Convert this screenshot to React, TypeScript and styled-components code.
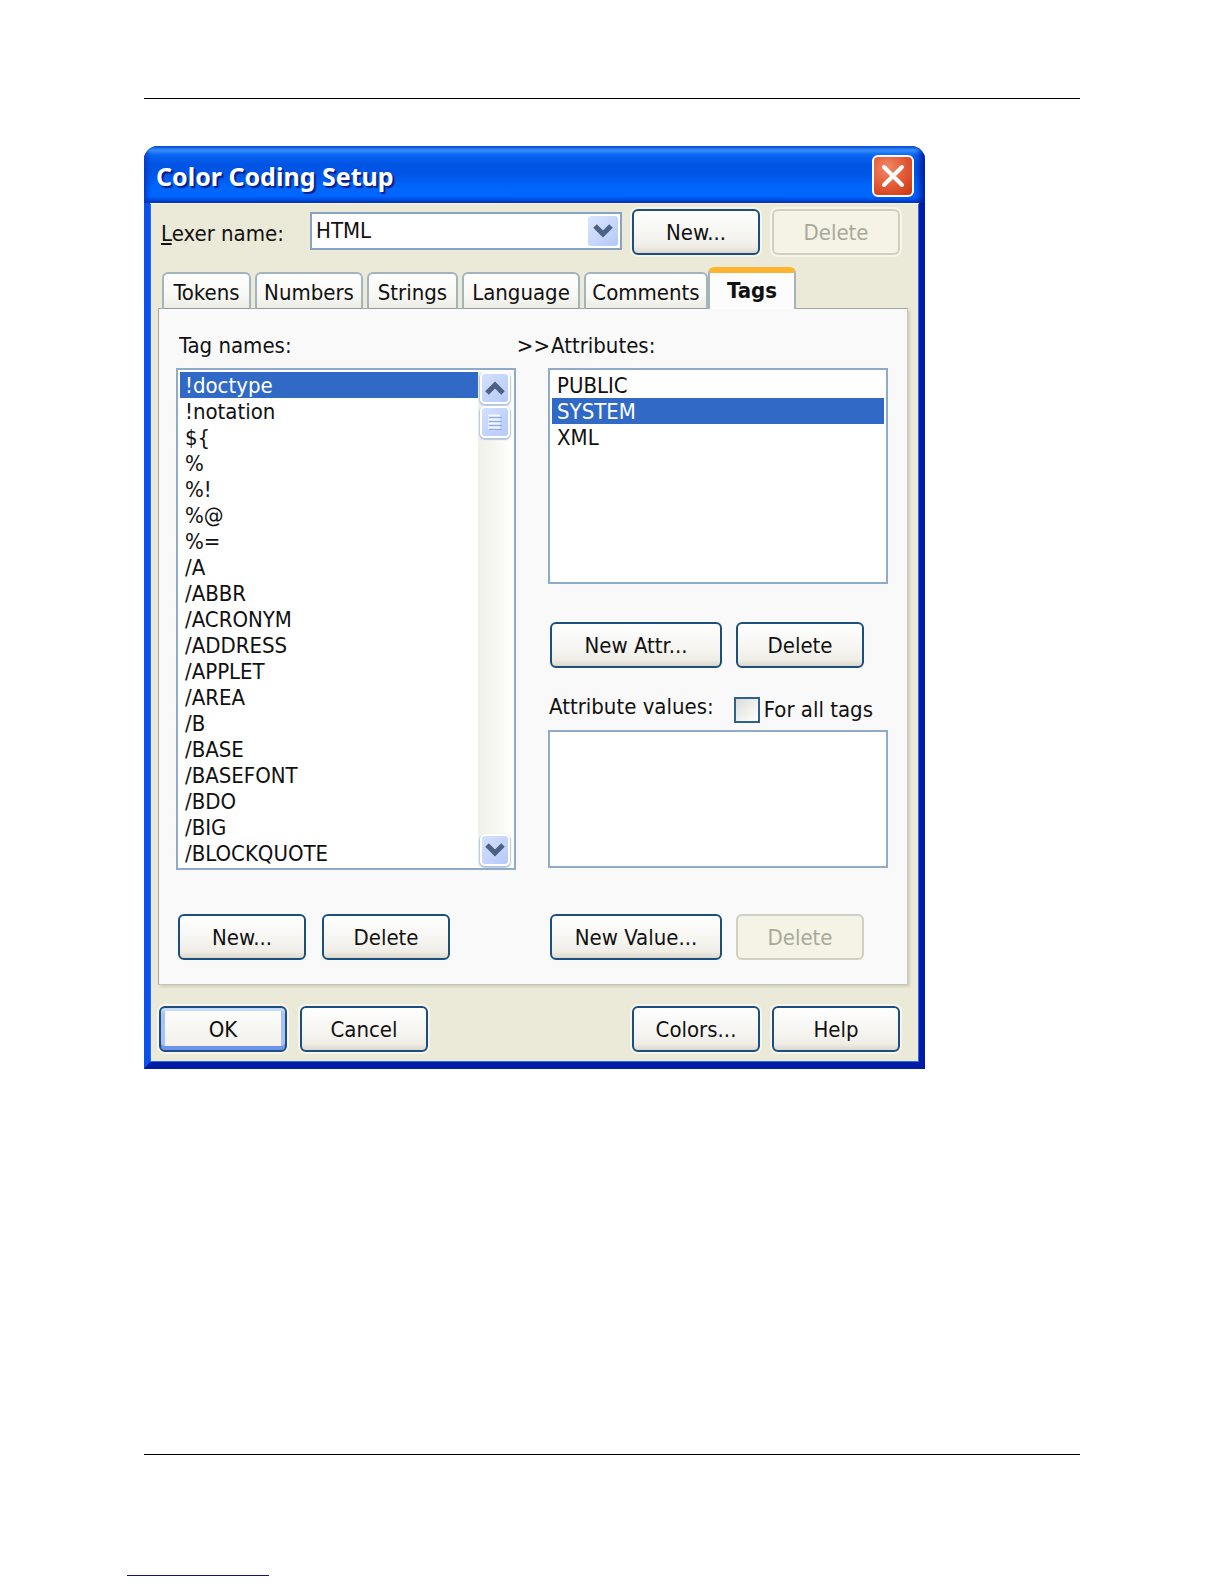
import React, { useState } from 'react';
import styled, { createGlobalStyle, css } from 'styled-components';

const uiFont = '"DejaVu Sans Condensed", "DejaVu Sans", "Noto Sans", sans-serif';

const GlobalStyle = createGlobalStyle`
  *, *::before, *::after { box-sizing: border-box; }
  body { margin: 0; background: #fff; }
`;

const Page = styled.div`
  display: flex;
  flex-direction: column;
  min-height: 100vh;
  padding: 98px 144px 8px;
  font-family: ${uiFont};
  font-size: 22px;
  line-height: 26px;
  color: #111;
`;

const Rule = styled.hr`
  width: 100%;
  height: 1px;
  margin: 0;
  border: 0;
  background: #000;
`;

const PageFoot = styled.footer`
  margin-top: auto;
`;

const LinkLine = styled.div`
  width: 142px;
  height: 1px;
  margin: 120px 0 0 -17px;
  background: #14147c;
`;

const Dialog = styled.section`
  width: 100%;
  max-width: 781px;
  margin: 47px 0 48px;
  border-radius: 14px 14px 0 0;
  overflow: hidden;
  background: #0848dc;
`;

const TitleBar = styled.header`
  display: flex;
  align-items: center;
  justify-content: space-between;
  height: 57px;
  padding: 3px 11px 0 12px;
  background: linear-gradient(
    #0a5ae0 0,
    #3a92ff 4px,
    #0a66f4 9px,
    #0054e3 18px,
    #0055e6 28px,
    #0066fd 42px,
    #0066ff 50px,
    #0050e0 54px,
    #0038c0 57px
  );
  box-shadow: inset 5px 0 5px -2px #0838c8, inset -7px 0 6px -2px #0020a4;
`;

const Title = styled.h1`
  margin: 0;
  font-family: "Noto Sans", "Open Sans", sans-serif;
  font-size: 25px;
  font-weight: 700;
  line-height: 30px;
  color: #fff;
  text-shadow: 2px 2px 1px #0a1e88;
`;

const CloseButton = styled.button`
  display: grid;
  place-items: center;
  width: 42px;
  height: 42px;
  padding: 0;
  border: 2px solid #fff;
  border-radius: 6px;
  background: radial-gradient(circle at 35% 30%, #ee8a6c 0, #e35a36 50%, #c83410 100%);
`;

const Body = styled.div`
  padding: 6px 11px 10px 8px;
  border: 6px solid;
  border-top: 0;
  border-bottom-width: 7px;
  border-color: #0a50ec #001ca4 #001ca4 #0a50ec;
  background: #ebe9d8;
  box-shadow: inset 0 1px 0 #fbf8e8, inset 1px -1px 0 #2a6cf0, inset -1px 0 0 #2a6cf0;
`;

const LexerRow = styled.div`
  display: flex;
  align-items: center;
  padding: 0 8px 0 3px;
`;

const LexerLabel = styled.label`
  width: 149px;
  flex: none;
  padding-top: 4px;
`;

const Combo = styled.div`
  display: grid;
  grid-template-columns: 1fr 32px;
  align-items: center;
  flex: 1;
  min-width: 0;
  height: 38px;
  margin-bottom: 2px;
  padding: 2px;
  border: 2px solid #86a3c4;
  background: #fff;
`;

const ComboSelect = styled.select`
  grid-area: 1 / 1 / 2 / 3;
  width: 100%;
  height: 28px;
  padding: 0 32px 0 2px;
  border: 0;
  outline: 0;
  appearance: none;
  background: transparent;
  color: inherit;
  font: inherit;
`;

const ArrowFace = styled.span`
  grid-area: 1 / 2;
  display: grid;
  place-items: center;
  height: 30px;
  margin-left: 2px;
  border-radius: 3px;
  background: linear-gradient(135deg, #dce6ff, #b4c8f8);
  pointer-events: none;
`;

const ButtonRow = styled.div<{ $gap: number; $inset?: number }>`
  display: flex;
  gap: ${(p) => p.$gap}px;
  padding-left: ${(p) => p.$inset ?? 0}px;
`;

const LexerButtons = styled(ButtonRow)`
  margin-left: 10px;
`;

const Button = styled.button<{ $wide?: boolean; $primary?: boolean; $halo?: boolean }>`
  flex: none;
  width: ${(p) => (p.$wide ? 172 : 128)}px;
  height: 46px;
  padding: 2px 0 0;
  border: 2px solid #1c4f80;
  border-radius: 6px;
  background: linear-gradient(#fff, #f5f4f0 60%, #efede6 85%, #dcd8cc);
  color: inherit;
  font: inherit;
  ${(p) =>
    p.$primary &&
    css`
      background: linear-gradient(#fdfdfc, #f1f0ea);
    `}
  box-shadow: ${(p) =>
    [
      p.$primary && 'inset 0 3px 0 #c6dcfc, inset 0 -4px 0 #6f92ea, inset 4px 0 0 #a8c2f6, inset -4px 0 0 #a8c2f6',
      p.$halo && '0 0 0 2px #f7f5ec',
    ]
      .filter(Boolean)
      .join(', ') || 'none'};

  &:disabled {
    border-color: #d0d0c2;
    background: #f4f3e6;
    color: #a9a99a;
  }
`;

const Tabs = styled.div`
  display: flex;
  align-items: flex-end;
  gap: 4px;
  height: 42px;
  margin: 12px 0 -1px;
  padding-left: 4px;
`;

const Tab = styled.button<{ $active: boolean; $width: number }>`
  position: relative;
  width: ${(p) => p.$width}px;
  height: 37px;
  padding: 3px 0 0;
  border: 2px solid #a3b4bd;
  border-bottom: 1px solid #919b9c;
  border-radius: 6px 6px 0 0;
  background: linear-gradient(#fff, #f6f6f2 70%, #ecebe4);
  color: inherit;
  font: inherit;
  ${(p) =>
    p.$active &&
    css`
      height: 42px;
      margin-left: -4px;
      padding: 0 0 1px;
      border-top: 6px solid #fdb52f;
      border-bottom: 0;
      background: #fcfcfc;
      font-weight: 700;
    `}
`;

const Panel = styled.div`
  display: grid;
  grid-template-columns: 1fr 32px 1fr;
  padding: 24px 19px 24px 17px;
  border: 1px solid;
  border-color: #a0a6a4 #c8c6b8 #c8c6b8 #a0a6a4;
  background: #f9f9f9;
  box-shadow: 2px 2px 2px #d2cfbe;
`;

const Column = styled.div`
  display: flex;
  flex-direction: column;
  min-width: 0;
`;

const Caption = styled.div`
  padding-left: 3px;
  margin-bottom: 9px;
  white-space: nowrap;
`;

const Marker = styled.span`
  margin-right: -2px;
  justify-self: end;
  white-space: nowrap;
`;

const ListFrame = styled.div<{ $height: number; $after: number }>`
  display: flex;
  height: ${(p) => p.$height}px;
  margin-bottom: ${(p) => p.$after}px;
  padding: 2px;
  border: 2px solid #8fabc8;
  background: #fff;
`;

const List = styled.ul`
  flex: 1;
  min-width: 0;
  margin: 0;
  padding: 0;
  list-style: none;
  overflow: hidden;
`;

const Item = styled.li<{ $selected: boolean }>`
  height: 26px;
  padding-left: 5px;
  line-height: 28px;
  white-space: nowrap;
  background: ${(p) => (p.$selected ? '#3169c6' : 'transparent')};
  color: ${(p) => (p.$selected ? '#fff' : 'inherit')};
`;

const ScrollTrack = styled.div`
  display: flex;
  flex-direction: column;
  align-items: center;
  width: 34px;
  background: linear-gradient(90deg, #f0f0ea, #fefefb);
`;

const ScrollButton = styled.button`
  display: grid;
  place-items: center;
  width: 30px;
  height: 32px;
  padding: 0;
  border: 2px solid #fff;
  border-radius: 5px;
  background: linear-gradient(135deg, #d3e0ff, #b6caf8);
  box-shadow: 0 1px 1px 1px #b4c6e6;
  &:last-child {
    margin-top: auto;
  }
`;

const Thumb = styled(ScrollButton)`
  margin-top: 2px;
`;

const ValuesHead = styled.div`
  display: flex;
  align-items: flex-start;
  justify-content: space-between;
  height: 26px;
  margin: 28px 0 8px;
  padding: 0 15px 0 1px;
  white-space: nowrap;
`;

const ValuesLabel = styled.span`
  line-height: 22px;
`;

const CheckLabel = styled.label`
  display: flex;
  align-items: center;
  gap: 4px;
  line-height: 28px;
`;

const CheckBox = styled.input`
  width: 26px;
  height: 26px;
  margin: 0;
  appearance: none;
  border: 2px solid #2f6090;
  background: linear-gradient(135deg, #dcdcd6, #fff);
  &:checked {
    background: #2f8a2f;
  }
`;

const Footer = styled.div`
  display: flex;
  justify-content: space-between;
  margin-top: 21px;
  padding: 0 8px 0 1px;
`;

const Chevron = ({ up = false }: { up?: boolean }) => (
  <svg width="20" height="14" viewBox="0 0 20 14" fill="none" stroke="#4d6185" strokeWidth="5" aria-hidden="true">
    <path d={up ? 'M2 12 L10 4 L18 12' : 'M2 2 L10 10 L18 2'} />
  </svg>
);

const tabs = [
  { name: 'Tokens', width: 89 },
  { name: 'Numbers', width: 108 },
  { name: 'Strings', width: 91 },
  { name: 'Language', width: 118 },
  { name: 'Comments', width: 124 },
  { name: 'Tags', width: 88 },
];

const tagNames = [
  '!doctype', '!notation', '${', '%', '%!', '%@', '%=', '/A', '/ABBR', '/ACRONYM', '/ADDRESS',
  '/APPLET', '/AREA', '/B', '/BASE', '/BASEFONT', '/BDO', '/BIG', '/BLOCKQUOTE',
];

const attributes = ['PUBLIC', 'SYSTEM', 'XML'];

type ListBoxProps = {
  label: string;
  items: string[];
  initial?: string;
  height: number;
  after: number;
  scroll?: boolean;
};

function ListBox({ label, items, initial, height, after, scroll }: ListBoxProps) {
  const [selected, setSelected] = useState(initial);
  return (
    <ListFrame $height={height} $after={after}>
      <List role="listbox" aria-labelledby={label} tabIndex={0}>
        {items.map((item) => (
          <Item
            key={item}
            role="option"
            aria-selected={item === selected}
            $selected={item === selected}
            onClick={() => setSelected(item)}
          >
            {item}
          </Item>
        ))}
      </List>
      {scroll && (
        <ScrollTrack>
          <ScrollButton type="button" aria-label="Scroll up"><Chevron up /></ScrollButton>
          <Thumb type="button" aria-label="Scroll thumb">
            <svg width="14" height="16" viewBox="0 0 14 16" aria-hidden="true">
              <path d="M0 1.5H12M0 5.5H12M0 9.5H12M0 13.5H12" stroke="#f2f6ff" strokeWidth="2" />
              <path d="M1 3.5H14M1 7.5H14M1 11.5H14M1 15.5H14" stroke="#8fa9e6" strokeWidth="1" />
            </svg>
          </Thumb>
          <ScrollButton type="button" aria-label="Scroll down"><Chevron /></ScrollButton>
        </ScrollTrack>
      )}
    </ListFrame>
  );
}

export default function App() {
  const [tab, setTab] = useState('Tags');
  return (
    <Page>
      <GlobalStyle />
      <Rule />
      <Dialog role="dialog" aria-labelledby="dialog-title">
        <TitleBar>
          <Title id="dialog-title">Color Coding Setup</Title>
          <CloseButton type="button" aria-label="Close">
            <svg width="24" height="24" viewBox="0 0 24 24" stroke="#fff" strokeWidth="4" strokeLinecap="round" aria-hidden="true">
              <path d="M3 3 L21 21 M21 3 L3 21" />
            </svg>
          </CloseButton>
        </TitleBar>
        <Body>
          <LexerRow>
            <LexerLabel htmlFor="lexer"><u>L</u>exer name:</LexerLabel>
            <Combo>
              <ComboSelect id="lexer" defaultValue="HTML">
                <option>HTML</option>
              </ComboSelect>
              <ArrowFace><Chevron /></ArrowFace>
            </Combo>
            <LexerButtons $gap={12}>
              <Button type="button" $halo>New...</Button>
              <Button type="button" $halo disabled>Delete</Button>
            </LexerButtons>
          </LexerRow>
          <Tabs role="tablist">
            {tabs.map(({ name, width }) => (
              <Tab
                key={name}
                type="button"
                role="tab"
                aria-selected={name === tab}
                $active={name === tab}
                $width={width}
                onClick={() => setTab(name)}
              >
                {name}
              </Tab>
            ))}
          </Tabs>
          <Panel role="tabpanel">
            <Column>
              <Caption id="tags-label">Tag names:</Caption>
              <ListBox label="tags-label" items={tagNames} initial="!doctype" height={502} after={44} scroll />
              <ButtonRow $gap={16} $inset={2}>
                <Button type="button">New...</Button>
                <Button type="button">Delete</Button>
              </ButtonRow>
            </Column>
            <Marker>&gt;&gt;</Marker>
            <Column>
              <Caption id="attributes-label">Attributes:</Caption>
              <ListBox label="attributes-label" items={attributes} initial="SYSTEM" height={216} after={38} />
              <ButtonRow $gap={14} $inset={2}>
                <Button type="button" $wide>New Attr...</Button>
                <Button type="button">Delete</Button>
              </ButtonRow>
              <ValuesHead>
                <ValuesLabel id="values-label">Attribute values:</ValuesLabel>
                <CheckLabel><CheckBox type="checkbox" />For all tags</CheckLabel>
              </ValuesHead>
              <ListBox label="values-label" items={[]} height={138} after={46} />
              <ButtonRow $gap={14} $inset={2}>
                <Button type="button" $wide>New Value...</Button>
                <Button type="button" disabled>Delete</Button>
              </ButtonRow>
            </Column>
          </Panel>
          <Footer>
            <ButtonRow $gap={13}>
              <Button type="button" $primary $halo>OK</Button>
              <Button type="button" $halo>Cancel</Button>
            </ButtonRow>
            <ButtonRow $gap={12}>
              <Button type="button" $halo>Colors...</Button>
              <Button type="button" $halo>Help</Button>
            </ButtonRow>
          </Footer>
        </Body>
      </Dialog>
      <PageFoot>
        <Rule />
        <LinkLine />
      </PageFoot>
    </Page>
  );
}
